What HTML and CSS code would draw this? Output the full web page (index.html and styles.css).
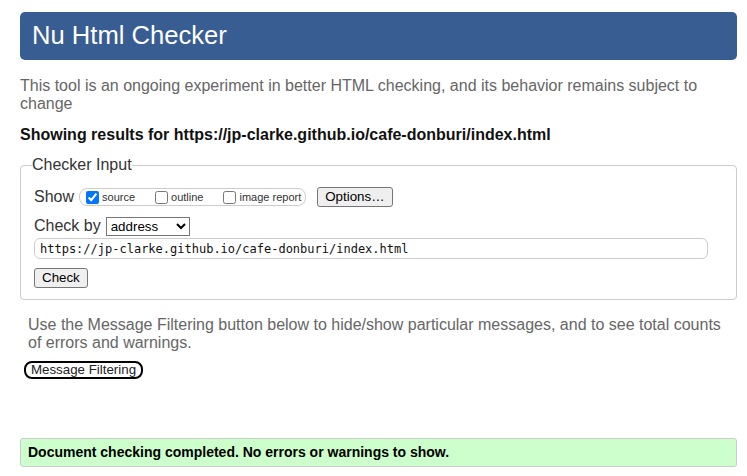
FILE: index.html
```html
<!DOCTYPE html>
<html lang="en">
<head>
<meta charset="utf-8">
<title>Nu Html Checker</title>
<link rel="stylesheet" href="styles.css">
</head>
<body>
<h1 class="title">Nu Html Checker</h1>
<p class="intro">This tool is an ongoing experiment in better HTML checking, and its behavior remains subject to change</p>
<p class="results">Showing results for https://jp-clarke.github.io/cafe-donburi/index.html</p>
<form class="form">
  <fieldset class="checker">
    <legend class="legend">Checker Input</legend>
    <div class="row row-show">
      <span class="label">Show</span>
      <span class="opts">
        <label class="opt"><input type="checkbox" class="cb" checked>source</label>
        <label class="opt"><input type="checkbox" class="cb">outline</label>
        <label class="opt"><input type="checkbox" class="cb">image report</label>
      </span>
      <button type="button" class="btn btn-options">Options…</button>
    </div>
    <div class="row row-by">
      <span class="label">Check by</span>
      <select class="select"><option>address</option></select>
    </div>
    <input class="url" type="text" value="https://jp-clarke.github.io/cafe-donburi/index.html">
    <div class="row row-check">
      <button type="button" class="btn btn-check">Check</button>
    </div>
  </fieldset>
</form>
<div class="filter">
  <p class="filter-text">Use the Message Filtering button below to hide/show particular messages, and to see total counts of errors and warnings.</p>
  <button type="button" class="btn-filter">Message Filtering</button>
</div>
<p class="success">Document checking completed. No errors or warnings to show.</p>
</body>
</html>
```
FILE: styles.css
```css
* { box-sizing: border-box; }
html, body { margin: 0; background: #fff; }
body {
  padding: 12px 10px 0 20px;
  font-family: "Liberation Sans", Arial, sans-serif;
  font-size: 16px;
  color: #222;
}
.title {
  margin: 0;
  height: 48px;
  line-height: 46px;
  padding-left: 12px;
  background: #385d93;
  color: #fff;
  font-size: 25.6px;
  font-weight: normal;
  border-radius: 5px;
}
.intro {
  margin: 17px 0 0;
  line-height: 18px;
  color: #666;
}
.results {
  margin: 13px 0 0;
  line-height: 18px;
  font-weight: bold;
  color: #111;
}
.form { margin: 12px 0 0; }
.checker {
  margin: 0;
  padding: 13px 13px 11px;
  border: 1px solid #ccc;
  border-radius: 4px;
  min-width: 0;
}
.legend {
  padding: 0;
  margin-left: -2px;
  line-height: 18px;
  color: #333;
}
.row {
  display: flex;
  align-items: center;
}
.row-show { height: 20px; }
.label { color: #333; line-height: 18px; white-space: nowrap; }
.opts {
  display: inline-flex;
  align-items: center;
  height: 18px;
  margin-left: 5px;
  padding: 0 4px 0 2px;
  border: 1px solid #ccc;
  border-radius: 8px;
  white-space: nowrap;
}
.opt {
  display: inline-flex;
  align-items: center;
  font-size: 11px;
  color: #333;
  margin-right: 16px;
  white-space: nowrap;
}
.opt:last-child { margin-right: 0; }
.cb {
  width: 13px;
  height: 13px;
  margin: 0 3px 0 4px;
  accent-color: #0075ff;
}
.btn {
  font-family: "Liberation Sans", Arial, sans-serif;
  font-size: 13.33px;
  color: #000;
  background: #efefef;
  border: 1px solid #767676;
  border-radius: 3px;
  padding: 1px 7px;
  height: 20px;
  line-height: 16px;
  white-space: nowrap;
}
.btn-options { margin-left: 11px; }
.row-by { height: 20px; margin-top: 9px; }
.select {
  margin-left: 5px;
  width: 84px;
  height: 19px;
  font-family: "Liberation Sans", Arial, sans-serif;
  font-size: 13.33px;
  color: #000;
  background: #fff;
  border: 1px solid #767676;
  border-radius: 0;
}
.url {
  display: block;
  margin-top: 2px;
  width: 674px;
  height: 21px;
  padding: 0 5px;
  border: 1px solid #ccc;
  border-radius: 6px;
  font-family: "DejaVu Sans Mono", "Liberation Mono", monospace;
  font-size: 12px;
  color: #111;
}
.row-check { margin-top: 9px; }
.filter {
  margin: 16px 0 0 4px;
}
.filter-text {
  margin: 0;
  padding: 0 8px 0 4px;
  line-height: 18px;
  color: #666;
}
.btn-filter {
  display: block;
  margin-top: 9px;
  width: 119px;
  height: 18px;
  padding: 0 4px;
  background: #fff;
  border: 2px solid #000;
  border-radius: 8px;
  font-family: "Liberation Sans", Arial, sans-serif;
  font-size: 13.33px;
  line-height: 14px;
  color: #222;
}
.success {
  margin: 59px 0 0;
  height: 29px;
  line-height: 27px;
  padding-left: 7px;
  background: #ccffcc;
  border: 1px solid #ccc;
  border-radius: 3px;
  font-size: 14px;
  font-weight: bold;
  color: #000;
}
```
